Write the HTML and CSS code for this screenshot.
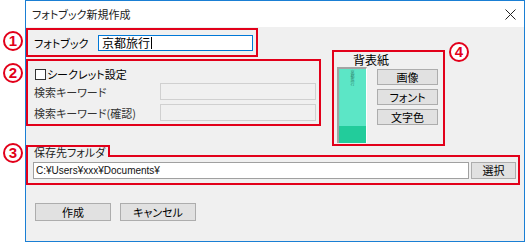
FILE: index.html
```html
<!DOCTYPE html>
<html lang="ja">
<head>
  <meta charset="UTF-8" />
  <title>フォトブック新規作成</title>
  <link rel="stylesheet" href="styles.css">
</head>
<body>
  <div class="stage">
    <span class="mark mark-1">1</span>
    <span class="mark mark-2">2</span>
    <span class="mark mark-3">3</span>
    <span class="mark mark-4">4</span>

    <div class="window">
      <div class="titlebar">
        <span class="title">フォトブック新規作成</span>
        <svg class="close" width="11" height="11" viewBox="0 0 11 11">
          <path d="M0.5 0.5 L10.5 10.5 M10.5 0.5 L0.5 10.5" stroke="#222" stroke-width="1" fill="none" />
        </svg>
      </div>

      <div class="client">
        <div class="top-row">
          <div class="left-col">
            <div class="note note-name">
              <span class="label">フォトブック</span>
              <div class="field field-active">京都旅行<span class="caret"></span></div>
            </div>

            <div class="note note-secret">
              <div class="check-row"><span class="checkbox"></span>シークレット設定</div>
              <div class="kw-row">
                <span class="label">検索キーワード</span>
                <div class="field field-disabled"></div>
              </div>
              <div class="kw-row">
                <span class="label">検索キーワード(確認)</span>
                <div class="field field-disabled"></div>
              </div>
            </div>
          </div>

          <div class="note note-cover">
            <div class="cover-title">背表紙</div>
            <div class="cover-body">
              <div class="spine">
                <span class="spine-text">京都旅行</span>
                <div class="spine-foot"></div>
              </div>
              <div class="cover-buttons">
                <button class="btn btn-small">画像</button>
                <button class="btn btn-small">フォント</button>
                <button class="btn btn-small">文字色</button>
              </div>
            </div>
          </div>
        </div>

        <div class="folder">
          <div class="folder-tab">保存先フォルダ</div>
          <div class="note folder-box">
            <div class="field field-path">C:¥Users¥xxx¥Documents¥</div>
            <button class="btn btn-select">選択</button>
          </div>
        </div>

        <div class="actions">
          <button class="btn btn-action">作成</button>
          <button class="btn btn-action">キャンセル</button>
        </div>
      </div>
    </div>
  </div>
</body>
</html>
```

FILE: styles.css
```css
* {
  margin: 0;
  padding: 0;
  box-sizing: border-box;
}

body {
  background: #fff;
  font-family: "Noto Sans CJK JP", sans-serif;
  font-size: 11px;
  font-feature-settings: "palt";
  color: #000;
}

.stage {
  position: relative;
  width: 525px;
  height: 242px;
}

/* annotation circles */
.mark {
  position: absolute;
  width: 20px;
  height: 20px;
  border: 2.5px solid #e2001a;
  border-radius: 50%;
  background: #fff;
  color: #e2001a;
  font-family: "Liberation Sans", sans-serif;
  font-weight: bold;
  font-size: 15px;
  line-height: 15px;
  text-align: center;
  z-index: 2;
}

.mark-1 { left: 3px; top: 31px; }
.mark-2 { left: 3px; top: 63px; }
.mark-3 { left: 3px; top: 143px; }
.mark-4 { left: 449px; top: 42px; }

.window {
  margin-left: 25px;
  width: 500px;
  height: 242px;
  border: 1px solid #1a7fd4;
  background: #f0f0f0;
}

.titlebar {
  height: 26px;
  background: #fff;
  display: flex;
  align-items: center;
  justify-content: space-between;
  padding: 0 8px 0 6px;
}

.title {
  color: #222;
}

.client {
  padding-top: 1px;
}

.top-row {
  display: flex;
  align-items: flex-start;
}

.left-col {
  width: 295px;
}

.note {
  border: 2px solid #e2001a;
}

.label {
  white-space: nowrap;
}

.field {
  background: #fff;
  border: 1px solid #7a7a7a;
}

/* photobook name */
.note-name {
  width: 232px;
  height: 29px;
  display: flex;
  align-items: center;
  padding-left: 6px;
}

.note-name .label {
  width: 64px;
}

.field-active {
  width: 155px;
  height: 16px;
  border-color: #0078d7;
  padding-left: 3px;
  line-height: 14px;
  display: flex;
  align-items: center;
  font-size: 12px;
}

.caret {
  display: inline-block;
  width: 1px;
  height: 12px;
  background: #000;
  margin-left: 1px;
}

/* secret settings */
.note-secret {
  margin-top: 2px;
  height: 67px;
  padding: 6px 3px 0 6px;
}

.check-row {
  display: flex;
  align-items: center;
  height: 14px;
  margin-left: 1px;
}

.checkbox {
  width: 11px;
  height: 11px;
  border: 1px solid #333;
  background: #fff;
  margin-right: 1px;
}

.kw-row {
  display: flex;
  align-items: center;
  margin-top: 2px;
  color: #333;
}

.kw-row + .kw-row {
  margin-top: 4px;
}

.kw-row .label {
  width: 126px;
}

.field-disabled {
  width: 156px;
  height: 17px;
  background: #f0f0f0;
  border-color: #d0d0d0;
}

/* spine cover */
.note-cover {
  width: 113px;
  height: 96px;
  margin: 22px 0 0 11px;
}

.cover-title {
  padding: 1px 0 0 19px;
  height: 15px;
  line-height: 14px;
  font-size: 12px;
}

.cover-body {
  display: flex;
  gap: 10px;
  padding-left: 3px;
}

.spine {
  width: 30px;
  height: 76px;
  background: #5ce6c6;
  border-top: 2px solid #a3a3a3;
  border-left: 2px solid #a3a3a3;
  border-right: 1px solid #fff;
  display: flex;
  flex-direction: column;
  align-items: center;
  justify-content: space-between;
}

.spine-text {
  writing-mode: vertical-rl;
  font-size: 4px;
  line-height: 4px;
  color: #2c7d66;
  margin-top: 1px;
}

.spine-foot {
  width: 100%;
  height: 17px;
  background: #22cc9b;
}

.cover-buttons {
  display: flex;
  flex-direction: column;
  gap: 4px;
  padding-top: 2px;
}

.btn {
  font-family: "Noto Sans CJK JP", sans-serif;
  font-size: 11px;
  font-feature-settings: "palt";
  color: #000;
  background: #e1e1e1;
  border: 1px solid #adadad;
  line-height: 14px;
}

.btn-small {
  width: 61px;
  height: 16px;
}

/* save folder */
.folder {
  margin-top: -1px;
}

.folder-tab {
  position: relative;
  z-index: 1;
  width: 84px;
  height: 12px;
  margin-bottom: -2px;
  border: 2px solid #e2001a;
  border-bottom: none;
  background: #f0f0f0;
  padding-left: 6px;
  line-height: 11px;
  white-space: nowrap;
  color: #222;
}

.folder-box {
  width: 494px;
  height: 30px;
  display: flex;
  align-items: center;
  gap: 2px;
  padding-left: 5px;
}

.field-path {
  width: 436px;
  height: 17px;
  border-color: #a0a0a0;
  padding-left: 2px;
  font-family: "Liberation Sans", "Noto Sans CJK JP", sans-serif;
  font-size: 10px;
  line-height: 15px;
  color: #111;
}

.btn-select {
  width: 45px;
  height: 17px;
}

/* dialog buttons */
.actions {
  display: flex;
  gap: 9px;
  margin: 18px 0 0 9px;
}

.btn-action {
  width: 76px;
  height: 18px;
}
```
